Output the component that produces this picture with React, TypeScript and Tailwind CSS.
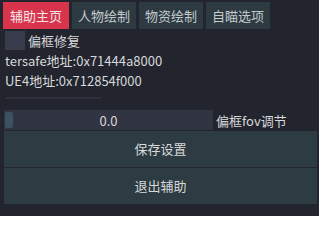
export default function App() {
  const tabs = [
    { label: '辅助主页', active: true, w: 'w-[66px]' },
    { label: '人物绘制', active: false, w: 'w-[64px]' },
    { label: '物资绘制', active: false, w: 'w-[64px]' },
    { label: '自瞄选项', active: false, w: 'w-[64px]' },
  ];

  return (
    <div
      className="w-[319px] h-[216px] overflow-hidden bg-[#23252e] text-[13px] text-[#d6d8da]"
      style={{ fontFamily: '"Noto Sans CJK SC", "Noto Sans", sans-serif' }}
    >
      {/* Tabs */}
      <div className="flex gap-[3px] pl-[3px] pt-[2px]">
        {tabs.map((t) => (
          <div
            key={t.label}
            className={`flex h-[27px] items-center justify-center ${t.w} ${
              t.active ? 'bg-[#d8344c] text-[#f0e6e8]' : 'bg-[#2d3a41] text-[#c4c9cc]'
            }`}
          >
            {t.label}
          </div>
        ))}
      </div>

      {/* Checkbox */}
      <div className="mt-[2px] flex h-[19px] items-center pl-[5px]">
        <div className="h-[19px] w-[20px] bg-[#393d4b]" />
        <span className="ml-[3px] leading-none">偏框修复</span>
      </div>

      {/* Addresses */}
      <div className="flex h-[20px] items-center pl-[5px] pt-[1px] leading-none">tersafe地址:0x71444a8000</div>
      <div className="flex h-[20px] items-center pl-[5px] leading-none">UE4地址:0x712854f000</div>

      {/* faint ghost line */}
      <div className="mt-[7px] ml-[6px] h-[2px] w-[95px] bg-[#3a3d47] opacity-50" />

      {/* Slider */}
      <div className="mt-[11px] flex h-[20px] items-center pl-[4px]">
        <div className="relative flex h-[20px] w-[209px] items-center justify-center bg-[#313542]">
          <div className="absolute left-[1px] top-[2px] h-[16px] w-[8px] rounded-[2px] bg-[#3b5360]" />
          <span className="leading-none">0.0</span>
        </div>
        <span className="ml-[3px] leading-none">偏框fov调节</span>
      </div>

      {/* Buttons */}
      <div className="mt-[1px] flex flex-col gap-[1px] pl-[4px] pr-[2px]">
        <div className="flex h-[36px] items-center justify-center bg-[#2d3b42]">保存设置</div>
        <div className="flex h-[36px] items-center justify-center bg-[#2d3b42]">退出辅助</div>
      </div>
    </div>
  );
}
